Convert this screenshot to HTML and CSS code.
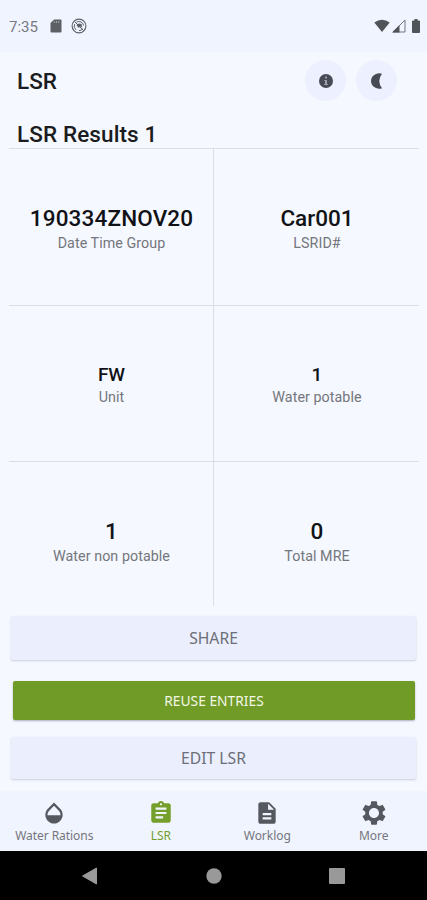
FILE: index.html
```html
<!DOCTYPE html>
<html lang="en">
<head>
<meta charset="utf-8">
<title>LSR</title>
<link rel="stylesheet" href="styles.css">
</head>
<body>
<div class="screen">
  <div class="status">
    <span class="time">7:35</span>
    <svg class="sd" width="12" height="14" viewBox="0 0 12 14"><path d="M4 .5h6.500q1 0 1 1v11q0 1-1 1h-9q-1 0-1-1V4z" fill="#5c5f64"/><path d="M4.300 2v2M6.500 2v2M8.700 2v2" stroke="#a5a8ae" stroke-width=".9"/></svg>
    <svg class="sync" width="16" height="16" viewBox="0 0 16 16" fill="none" stroke="#5c5f64"><circle cx="8" cy="8" r="6.900" stroke-width="1.100"/><path d="M5 11.800A4.800 4.800 0 0 1 3.600 6.200M5.500 4.200A4.700 4.700 0 0 1 12.600 7.500M11.800 10.800A4.700 4.700 0 0 1 8 12.600M3.500 3.500l9 9" stroke-width="1"/><path d="M5.500 7.500Q7 4.500 10.500 6l.8 3.500-2.300-1-1 1.500z" fill="#5c5f64" stroke="none"/></svg>
    <div class="signals">
      <svg width="16" height="14" viewBox="0 0 16 14"><path d="M.3 3.500Q8-2 15.700 3.500L8 13z" fill="#505358"/></svg>
      <svg width="14" height="14" viewBox="0 0 14 14"><path d="M1 13L13 1v12z" fill="none" stroke="#74777c"/><path d="M0 13.500L7.500 6v7.500z" fill="#505358"/></svg>
      <svg width="8" height="14" viewBox="0 0 8 14"><path d="M2.500 0h3v1.500H7q1 0 1 1V13q0 1-1 1H1q-1 0-1-1V2.500q0-1 1-1h1.500z" fill="#505358"/></svg>
    </div>
  </div>
  <header class="appbar">
    <h1>LSR</h1>
    <button class="round" aria-label="Info"><svg width="16" height="16" viewBox="0 0 16 16"><circle cx="8" cy="8" r="7" fill="#484b55"/><path d="M7 3.600h2v2H7zM6.200 7H9v4h1v1H6v-1h1V8h-.8z" fill="#9a9daa"/></svg></button>
    <button class="round" aria-label="Dark mode"><svg width="16" height="16" viewBox="0 0 16 16"><path d="M13 .8Q7.500 8 13 15.200Q10 16.300 7 15Q2 13 2 8T7 1Q10-.3 13 .8z" fill="#484b55"/></svg></button>
  </header>
  <h2>LSR Results 1</h2>
  <main class="grid">
    <section class="cell"><strong class="wide">190334ZNOV20</strong><span>Date Time Group</span></section>
    <section class="cell"><strong>Car001</strong><span>LSRID#</span></section>
    <section class="cell small"><strong>FW</strong><span>Unit</span></section>
    <section class="cell small"><strong>1</strong><span>Water potable</span></section>
    <section class="cell last"><strong>1</strong><span>Water non potable</span></section>
    <section class="cell last"><strong>0</strong><span>Total MRE</span></section>
  </main>
  <div class="actions">
    <button class="btn">SHARE</button>
    <button class="btn primary">REUSE ENTRIES</button>
    <button class="btn edit">EDIT LSR</button>
  </div>
  <nav class="tabs">
    <a class="tab"><svg width="26" height="26" viewBox="0 0 24 24"><path fill="#55585e" d="M17.660 8L12 2.350 6.340 8C4.780 9.560 4 11.640 4 13.640s.78 4.110 2.340 5.670 3.610 2.350 5.660 2.350 4.100-.79 5.660-2.350S20 15.640 20 13.640 19.220 9.560 17.660 8zM6 14c.01-2 .62-3.270 1.760-4.400L12 5.270l4.240 4.380C17.380 10.770 17.990 12 18 14H6z"/></svg><span>Water Rations</span></a>
    <a class="tab active"><svg width="26" height="26" viewBox="0 0 24 24"><path fill="#759f2b" d="M19 3h-4.180C14.400 1.840 13.300 1 12 1s-2.400.84-2.820 2H5c-1.100 0-2 .9-2 2v14c0 1.100.9 2 2 2h14c1.100 0 2-.9 2-2V5c0-1.100-.9-2-2-2zm-7 0c.55 0 1 .45 1 1s-.45 1-1 1-1-.45-1-1 .45-1 1-1zm2 14H7v-2h7v2zm3-4H7v-2h10v2zm0-4H7V7h10v2z"/></svg><span>LSR</span></a>
    <a class="tab"><svg width="26" height="26" viewBox="0 0 24 24"><path fill="#55585e" d="M14 2H6c-1.100 0-2 .9-2 2v16c0 1.100.89 2 2 2h12c1.100 0 2-.9 2-2V8l-6-6zm2 16H8v-2h8v2zm0-4H8v-2h8v2zm-3-5V3.500L18.500 9H13z"/></svg><span>Worklog</span></a>
    <a class="tab"><svg width="28" height="28" viewBox="0 0 24 24"><path fill="#55585e" d="M19.430 12.980c.04-.32.07-.64.07-.98s-.03-.66-.07-.98l2.110-1.650c.19-.15.24-.42.12-.64l-2-3.460c-.12-.22-.39-.3-.61-.22l-2.490 1c-.52-.4-1.080-.73-1.690-.98l-.38-2.650C14.460 2.180 14.250 2 14 2h-4c-.25 0-.46.18-.49.42l-.38 2.650c-.61.25-1.170.59-1.690.98l-2.490-1c-.23-.09-.49 0-.61.22l-2 3.460c-.13.22-.07.49.12.64l2.110 1.650c-.04.32-.07.65-.07.98s.03.66.07.98l-2.110 1.650c-.19.15-.24.42-.12.64l2 3.460c.12.22.39.3.61.22l2.490-1c.52.4 1.080.73 1.690.98l.38 2.650c.03.24.24.42.49.42h4c.25 0 .46-.18.49-.42l.38-2.650c.61-.25 1.170-.59 1.690-.98l2.490 1c.23.09.49 0 .61-.22l2-3.460c.12-.22.07-.49-.12-.64l-2.110-1.650zM12 16.300c-2.370 0-4.300-1.930-4.300-4.300s1.930-4.300 4.300-4.300 4.300 1.930 4.300 4.300-1.930 4.300-4.300 4.300z"/></svg><span>More</span></a>
  </nav>
  <div class="system">
    <svg width="18" height="20" viewBox="0 0 18 20"><path d="M1.500 10L15.500 2v16z" fill="#999" stroke="#999" stroke-linejoin="round"/></svg>
    <svg width="16" height="16" viewBox="0 0 16 16"><circle cx="8" cy="8" r="7.700" fill="#999"/></svg>
    <svg width="18" height="18" viewBox="0 0 18 18"><rect x="1" y="1" width="16" height="16" rx="1" fill="#999"/></svg>
  </div>
</div>
</body>
</html>
```
FILE: styles.css
```css
* { box-sizing: border-box; }
body { margin: 0; font-family: Roboto, sans-serif; background: #f5f8ff; }
svg { display: block; flex: none; }
button { border: 0; padding: 0; margin: 0; font: inherit; }
.screen { width: 427px; height: 900px; display: flex; flex-direction: column; overflow: hidden; background: #f5f8ff; }

.status { height: 52px; flex: none; display: flex; align-items: center; padding: 0 7px 0 9px; background: #f0f4ff; color: #77797f; font-size: 15px; }
.time { width: 41px; line-height: 18px; padding-top: 1px; }
.sync { margin-left: 9px; }
.signals { margin-left: auto; display: flex; align-items: center; gap: 2px; }
.signals svg:last-child { margin-left: 4px; }

.appbar { height: 57px; flex: none; display: flex; align-items: center; padding: 0 30px 0 17px; gap: 10px; }
h1, h2 { margin: 0; font-weight: 500; font-size: 22.500px; color: #1b1c20; }
h1 { margin-right: auto; padding-top: 1px; }
h2 { height: 39px; flex: none; line-height: 28px; padding: 11px 17px 0; letter-spacing: .1px; }
.round { width: 41px; height: 41px; border-radius: 50%; background: #edf0fe; display: flex; align-items: center; justify-content: center; }

.grid { margin: 0 8px 0 9px; flex: none; display: grid; grid-template-columns: 205px 205px; grid-template-rows: 157px 156px 145px; }
.cell { border-top: 1px solid #dcdee6; display: flex; flex-direction: column; align-items: center; padding: 55px 0 0 1px; text-align: center; }
.cell:nth-child(odd) { border-right: 1px solid #dcdee6; }
.cell strong { font-weight: 500; font-size: 22.500px; line-height: 28px; color: #111216; }
.cell .wide { letter-spacing: .15px; }
.cell span { font-size: 14.300px; letter-spacing: .05px; line-height: 20px; color: #74767c; margin-top: 1px; }
.cell.small strong { font-size: 19px; }
.cell.small span { margin-top: -1px; position: relative; top: -1px; }

.actions { flex: none; margin: 10px 11px 0 11px; display: flex; flex-direction: column; }
.btn { height: 44px; font-family: "Noto Sans", sans-serif; font-size: 15.700px; color: #6c6f77; background: #eaeefd; border-radius: 2px; box-shadow: 0 1px 2px rgba(60, 65, 90, .22); }
.primary { height: 39px; margin: 21px 1px 17px 2px; background: #719b27; color: #f2f7e8; font-size: 13.800px; box-shadow: 0 1px 2px rgba(60, 65, 90, .4); }
.edit { height: 42px; }

.tabs { margin-top: auto; flex: none; height: 60px; display: grid; grid-template-columns: repeat(4, 1fr); padding-left: 1px; background: #f0f4ff; }
.tab { display: flex; flex-direction: column; align-items: center; justify-content: space-between; padding: 9px 0 7px; font-family: "Noto Sans", sans-serif; font-size: 12px; letter-spacing: -.05px; line-height: 16px; color: #74767d; }
.tab span { white-space: nowrap; }
.tab.active { color: #759f2b; }
.tab:last-child svg { margin-top: -1px; }
.system { height: 49px; flex: none; background: #000; display: flex; align-items: center; justify-content: space-between; padding: 0 81px; }
```
